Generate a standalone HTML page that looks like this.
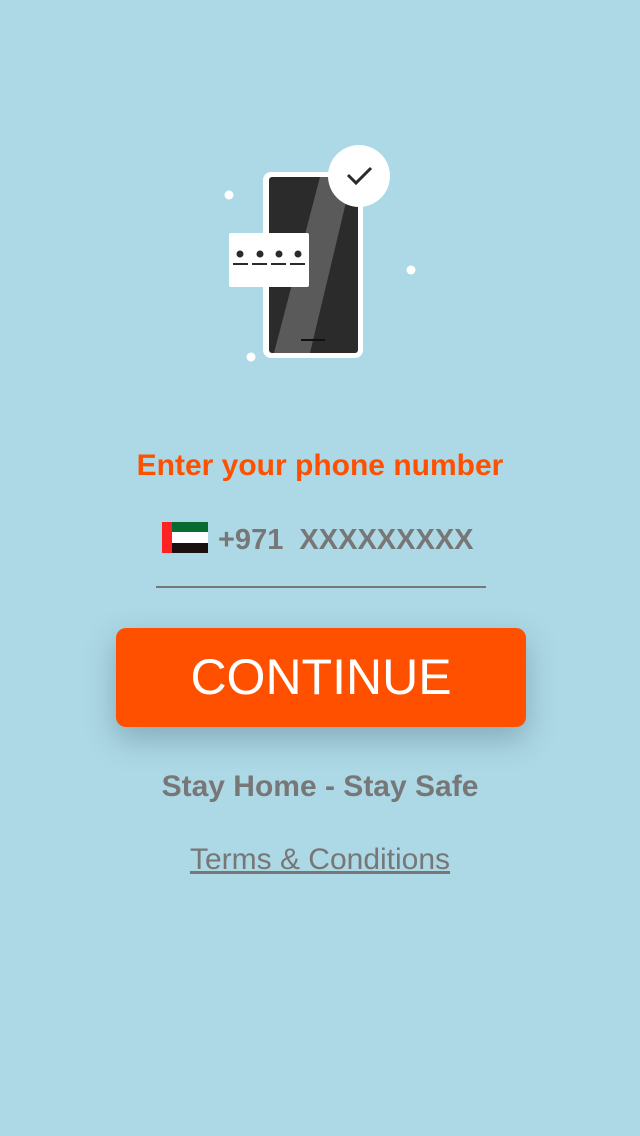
<!DOCTYPE html>
<html><head><meta charset="utf-8"><style>
body{margin:0;width:640px;height:1136px;background:#add8e6;position:relative;overflow:hidden;font-family:"Liberation Sans",Arial,sans-serif}
.t{position:absolute;left:0;width:640px;text-align:center;white-space:nowrap}
</style></head><body>
<svg style="position:absolute;left:0;top:0" width="640" height="400">
<circle cx="229" cy="195" r="4.5" fill="#fff"/>
<circle cx="411" cy="270" r="4.5" fill="#fff"/>
<circle cx="251" cy="357" r="4.5" fill="#fff"/>
<rect x="263" y="172" width="100" height="186" rx="8" fill="#fff"/>
<rect x="269" y="177" width="89" height="176" rx="3" fill="#2b2b2b"/>
<polygon points="320,177 352,177 310,353 274,353" fill="#5a5a5a"/>
<line x1="301" y1="340" x2="325" y2="340" stroke="#111" stroke-width="2"/>
<circle cx="359" cy="176" r="31" fill="#fff"/>
<path d="M348 175 L356 183 L371 168" fill="none" stroke="#2b2b2b" stroke-width="3"/>
<rect x="229" y="233" width="80" height="54" rx="2" fill="#fff"/>
<g fill="#2b2b2b"><circle cx="240" cy="254" r="3.5"/><circle cx="260" cy="254" r="3.5"/><circle cx="279" cy="254" r="3.5"/><circle cx="298" cy="254" r="3.5"/></g>
<g stroke="#2b2b2b" stroke-width="2"><line x1="233" y1="264" x2="248" y2="264"/><line x1="252" y1="264" x2="267" y2="264"/><line x1="271" y1="264" x2="286" y2="264"/><line x1="290" y1="264" x2="305" y2="264"/></g>
</svg>
<div class="t" style="top:449px;font-size:30px;font-weight:bold;color:#ff5000">Enter your phone number</div>
<div style="position:absolute;left:162px;top:522px;width:46px;height:31px">
<div style="position:absolute;left:0;top:0;width:10px;height:31px;background:#f22"></div>
<div style="position:absolute;left:10px;top:0;width:36px;height:10px;background:#0a6b30"></div>
<div style="position:absolute;left:10px;top:10px;width:36px;height:11px;background:#fff"></div>
<div style="position:absolute;left:10px;top:21px;width:36px;height:10px;background:#1a1010"></div>
</div>
<div style="position:absolute;left:218px;top:524px;font-size:29px;font-weight:bold;color:#777;white-space:nowrap">+971&nbsp; XXXXXXXXX</div>
<div style="position:absolute;left:156px;top:586px;width:330px;height:2px;background:#777"></div>
<div style="position:absolute;left:116px;top:628px;width:410px;height:99px;border-radius:10px;background:#ff5000;box-shadow:0 12px 30px rgba(60,90,100,.35);color:#fff;font-size:50px;text-align:center;line-height:99px">CONTINUE</div>
<div class="t" style="top:770px;font-size:30px;font-weight:bold;color:#777">Stay Home - Stay Safe</div>
<div class="t" style="top:843px;font-size:30px;color:#777;text-decoration:underline">Terms &amp; Conditions</div>
</body></html>
